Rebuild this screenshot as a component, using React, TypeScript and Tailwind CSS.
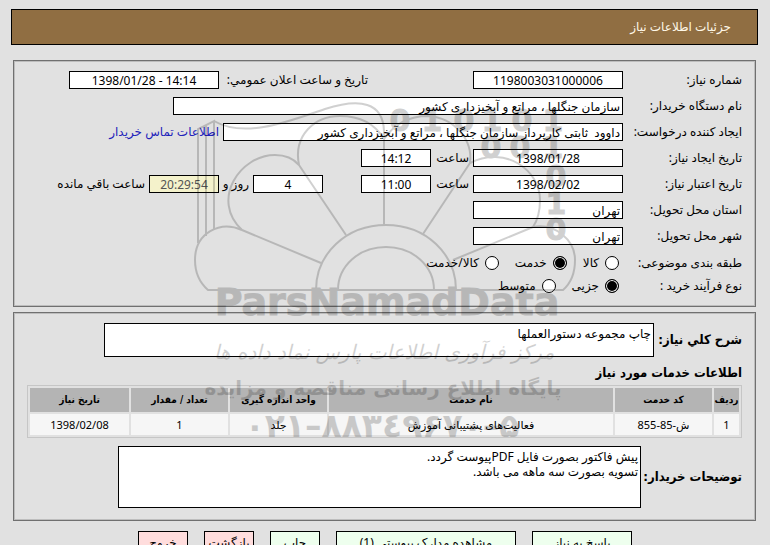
import React from 'react';
import { clsx } from 'clsx';

const boxClass = 'shrink-0 border border-black px-0.5';
const headingClass = "font-['DejaVu_Sans_Condensed','DejaVu_Sans',sans-serif] text-[13px] font-bold";

type FieldProps = {
  id: string;
  value: string;
  className: string;
  center?: boolean;
  muted?: boolean;
  label?: string;
};

function Field({ id, value, className, center = false, muted = false, label }: FieldProps) {
  return (
    <input
      id={id}
      type="text"
      defaultValue={value}
      aria-label={label}
      className={clsx(
        boxClass,
        'h-[18px] leading-4',
        center && 'text-center',
        muted ? 'bg-[#f4f2cb] text-[#555]' : 'bg-white',
        className,
      )}
    />
  );
}

function Row({ id, label, children }: { id: string; label: string; children: React.ReactNode }) {
  return (
    <div className="flex h-[18px] items-center gap-1">
      <label htmlFor={id} className="w-[115px] shrink-0 whitespace-nowrap">
        {label}
      </label>
      {children}
    </div>
  );
}

type RadioGroupProps = {
  name: string;
  legend: string;
  options: string[];
  selected: string;
};

function RadioGroup({ name, legend, options, selected }: RadioGroupProps) {
  return (
    <div role="radiogroup" aria-label={legend} className="flex h-5 items-center">
      <span className="w-[119px] shrink-0">{legend}</span>
      <div className="flex gap-4 ps-1">
        {options.map((option) => (
          <label key={option} className="flex items-center gap-1.5">
            <input
              type="radio"
              name={name}
              defaultChecked={option === selected}
              className="size-3.5 appearance-none rounded-full border border-black bg-white checked:bg-black checked:shadow-[inset_0_0_0_1px_white]"
            />
            {option}
          </label>
        ))}
      </div>
    </div>
  );
}

const columns = [
  { title: 'ردیف', value: '1', width: 'w-[25px]' },
  { title: 'کد خدمت', value: 'ش-85-855', width: 'w-[97px]' },
  { title: 'نام خدمت', value: 'فعالیت‌های پشتیبانی آموزش', width: 'w-auto' },
  { title: 'واحد اندازه گیری', value: 'جلد', width: 'w-[97px]' },
  { title: 'تعداد / مقدار', value: '1', width: 'w-[97px]' },
  { title: 'تاریخ نیاز', value: '1398/02/08', width: 'w-[99px]' },
];

const actions = [
  { label: 'پاسخ به نیاز', className: 'w-[100px] bg-[#eeffee]' },
  { label: 'مشاهده مدارک پیوستی (1)', className: 'w-[180px] bg-[#eeffee]' },
  { label: 'چاپ', className: 'w-[50px] bg-[#eeffee]' },
  { label: 'بازگشت', className: 'w-[50px] bg-[#ffdddd]' },
  { label: 'خروج', className: 'w-[50px] bg-[#ffdddd]' },
];

function Watermark() {
  return (
    <svg
      aria-hidden="true"
      viewBox="0 0 400 350"
      className="pointer-events-none absolute inset-x-0 top-[95px] mx-auto w-[400px] overflow-visible opacity-[0.18]"
    >
      <g fill="none" stroke="black" strokeWidth="2">
        <path d="M13 148V34L29 26V135M21 141V30" />
        <path d="M29 26C60 44 105 26 140 14C175 3 198 7 199 36V130" />
        <path d="M131 195C131 159 161 130 201 130S271 159 271 195M153 195C153 171 174 152 201 152S249 171 249 195" />
        <path d="M57 135C35 125 10 138 10 165C10 178 15 188 23 195H378C386 188 390 178 390 165C390 145 370 128 348 132L268 165" />
        <path d="M57 135C25 105 55 60 90 60C100 60 108 63 114 70L161 140M57 135L136 168" />
        <path d="M114 70C108 40 130 21 155 21C175 21 190 29 199 44" />
        <path d="M199 44C210 28 225 21 243 21C270 23 288 45 285 68L238 139" />
        <path d="M285 68C320 50 355 75 355 105C355 117 352 126 348 132" />
      </g>
      <g fill="black" stroke="black" textAnchor="middle" direction="ltr" fontWeight="bold" fontFamily="DejaVu Sans">
        <g fontSize="30">
          <text x="215 247 279 307 337 368" y="36">
            010101
          </text>
          <text x="306 335 368" y="63">
            001
          </text>
          <text x="371" y="92">
            0
          </text>
          <text x="371" y="119">
            1
          </text>
          <text x="371" y="145">
            0
          </text>
        </g>
        <text x="202" y="220" fontSize="38">
          ParsNamadData
        </text>
      </g>
      <g fill="black" textAnchor="middle" direction="rtl" fontFamily="DejaVu Sans">
        <text x="199" y="264" fontSize="20" fontStyle="italic">
          مرکز فرآوری اطلاعات پارس نماد داده ها
        </text>
        <text x="198" y="300" fontSize="20" fontWeight="bold">
          پایگاه اطلاع رسانی مناقصه و مزایده
        </text>
        <text x="197" y="342" fontSize="33" fontWeight="bold" direction="ltr">
          ۰۲۱–۸۸۳٤۹۶۷۰–۵
        </text>
      </g>
    </svg>
  );
}

export default function App() {
  return (
    <main
      dir="rtl"
      lang="fa"
      className="relative h-screen overflow-hidden bg-[#e1e1e1] pt-[9px] font-['Noto_Sans','DejaVu_Sans',sans-serif] text-xs leading-4 text-black"
    >
      <header className="mr-3 ml-[11px] flex h-9 items-center border border-black bg-[#906e42] px-[26px] text-[#fff8e8]">
        <h1>جزئیات اطلاعات نیاز</h1>
      </header>

      <section className="mr-3.5 ml-[13px] mt-[15px] flex flex-col gap-2 border border-[#707070] px-[13px] py-2.5 shadow-[inset_0_0_0_1px_#bdbdbd]">
        <div className="flex justify-between pe-[42px]">
          <Row id="number" label="شماره نیاز:">
            <Field id="number" value="1198003031000006" className="w-[150px]" center />
          </Row>
          <div className="flex items-center gap-1">
            <label htmlFor="announced" className="w-[145px] whitespace-nowrap">
              تاریخ و ساعت اعلان عمومي:
            </label>
            <Field id="announced" value="14:14 - 1398/01/28" className="w-[150px]" center />
          </div>
        </div>
        <Row id="buyer" label="نام دستگاه خریدار:">
          <Field id="buyer" value="سازمان جنگلها ، مراتع و آبخیزداری کشور" className="w-[450px]" />
        </Row>
        <Row id="creator" label="ایجاد کننده درخواست:">
          <Field
            id="creator"
            value="داوود  ثابتی کارپرداز سازمان جنگلها ، مراتع و آبخیزداری کشور"
            className="w-[400px]"
          />
          <a href="#contact" className="text-[#2222bb]">
            اطلاعات تماس خریدار
          </a>
        </Row>
        <Row id="created-date" label="تاریخ ایجاد نیاز:">
          <Field id="created-date" value="1398/01/28" className="w-[150px]" center />
          <label htmlFor="created-time" className="w-[34px]">
            ساعت
          </label>
          <Field id="created-time" value="14:12" className="w-[70px]" center />
        </Row>
        <Row id="valid-date" label="تاریخ اعتبار نیاز:">
          <Field id="valid-date" value="1398/02/02" className="w-[150px]" center />
          <label htmlFor="valid-time" className="w-[34px]">
            ساعت
          </label>
          <Field id="valid-time" value="11:00" className="w-[70px]" center />
          <div className="flex items-center gap-1 ps-[34px]">
            <Field id="days" value="4" className="w-[70px]" center />
            <label htmlFor="days" className="w-[26px] whitespace-nowrap">
              روز و
            </label>
            <Field id="remaining" value="20:29:54" className="w-[70px]" center muted />
            <label htmlFor="remaining">ساعت باقي مانده</label>
          </div>
        </Row>
        <Row id="province" label="استان محل تحویل:">
          <Field id="province" value="تهران" className="w-[150px]" />
        </Row>
        <Row id="city" label="شهر محل تحویل:">
          <Field id="city" value="تهران" className="w-[150px]" />
        </Row>
        <div className="flex flex-col gap-[3px]">
          <RadioGroup
            name="category"
            legend="طبقه بندی موضوعی:"
            options={['کالا', 'خدمت', 'کالا/خدمت']}
            selected="خدمت"
          />
          <RadioGroup name="process" legend="نوع فرآیند خرید :" options={['جزیی', 'متوسط']} selected="جزیی" />
        </div>
      </section>

      <section className="mr-3.5 ml-[13px] mt-[5px] border border-[#707070] px-[13px] pt-2.5 pb-3 shadow-[inset_0_0_0_1px_#bdbdbd]">
        <div className="flex items-center gap-1">
          <label htmlFor="summary" className={clsx(headingClass, 'w-[84px] shrink-0 whitespace-nowrap')}>
            شرح کلي نیاز:
          </label>
          <textarea
            id="summary"
            defaultValue="چاپ مجموعه دستورالعملها"
            className={clsx(boxClass, 'h-[34px] w-[550px] resize-none overflow-hidden bg-white pt-0.5 leading-[15px]')}
          />
        </div>
        <h2 className={clsx(headingClass, 'mt-2 mb-1 leading-4')}>اطلاعات خدمات مورد نیاز</h2>
        <table className="h-[53px] w-full table-fixed border-separate border-spacing-0.5 border border-[#c6c6c6] text-center text-[11px]">
          <thead className="font-['DejaVu_Sans_Condensed','DejaVu_Sans',sans-serif] text-[10px]">
            <tr className="h-6">
              {columns.map((column) => (
                <th
                  key={column.title}
                  scope="col"
                  className={clsx('whitespace-nowrap bg-[#b4b4b4] p-0', column.width)}
                >
                  {column.title}
                </th>
              ))}
            </tr>
          </thead>
          <tbody>
            <tr className="h-[21px]">
              {columns.map((column) => (
                <td key={column.title} className="bg-[#f6f6f6] p-0">
                  {column.value}
                </td>
              ))}
            </tr>
          </tbody>
        </table>
        <div className="mt-2 flex items-center gap-1">
          <label htmlFor="notes" className={clsx(headingClass, 'w-[97px] shrink-0 whitespace-nowrap')}>
            توضیحات خریدار:
          </label>
          <textarea
            id="notes"
            defaultValue={'پیش فاکتور بصورت فایل PDFپیوست گردد.\nتسویه بصورت سه ماهه می باشد.'}
            className={clsx(boxClass, 'h-[62px] w-[523px] resize-none overflow-hidden bg-white pt-0.5 leading-[15px]')}
          />
        </div>
      </section>

      <div className="mt-2.5 flex justify-center gap-4">
        {actions.map((action) => (
          <button
            key={action.label}
            type="button"
            className={clsx('h-6 whitespace-nowrap border border-black', action.className)}
          >
            {action.label}
          </button>
        ))}
      </div>

      <Watermark />
    </main>
  );
}
